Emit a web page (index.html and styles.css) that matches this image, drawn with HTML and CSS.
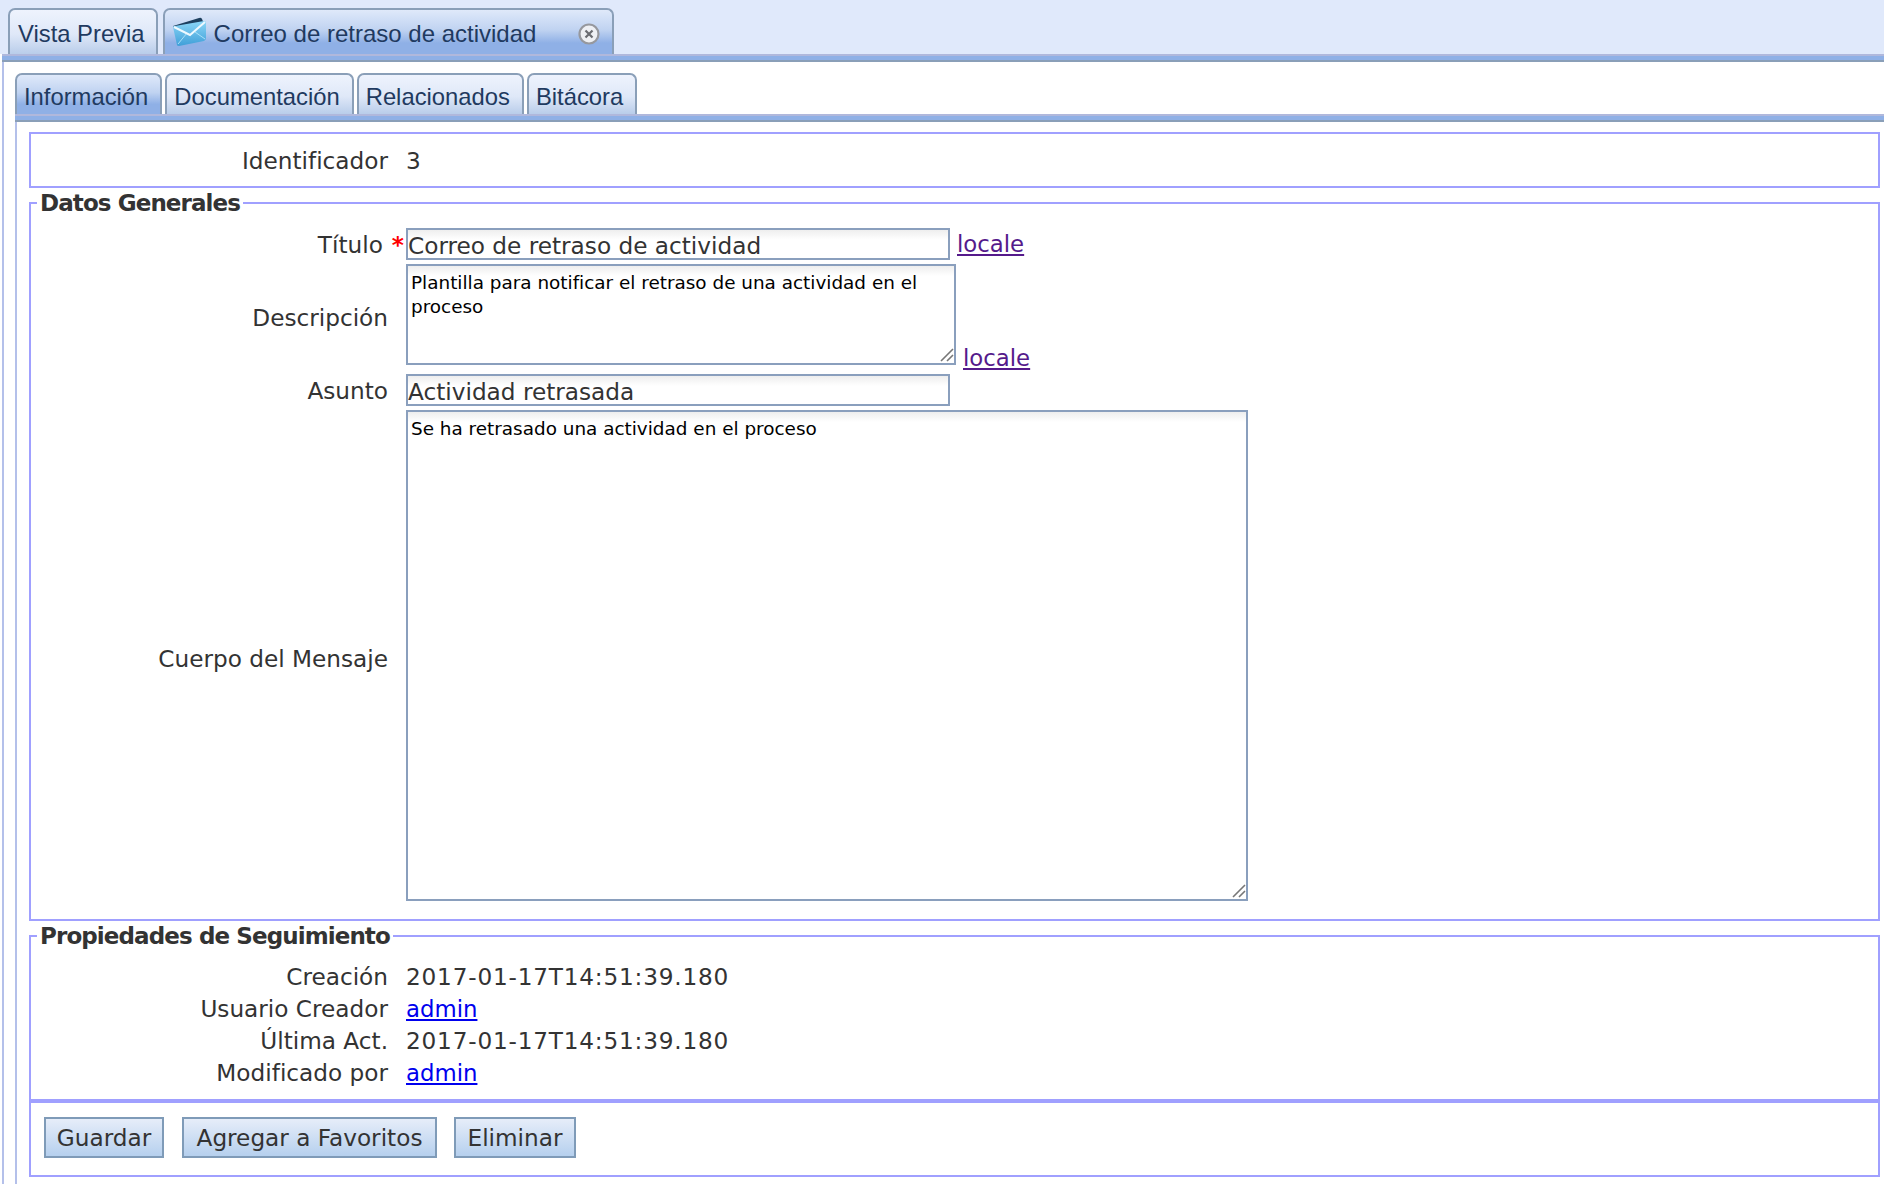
FILE: index.html
```html
<!DOCTYPE html>
<html lang="es">
<head>
    <meta charset="UTF-8">
    <meta name="viewport" content="width=device-width, initial-scale=1.0">
    <title>Correo de retraso de actividad</title>
    <link rel="stylesheet" href="styles.css">
</head>
<body>
    <nav class="tabs tabs-outer">
        <a class="tab">Vista Previa</a>
        <a class="tab tab-active tab-wide">
            <svg class="mail-icon" width="35" height="30" viewBox="0 0 35 30">
                <defs>
                    <linearGradient id="mailFill" x1="0" y1="0" x2="0" y2="1">
                        <stop offset="0" stop-color="#8bd6f7"/>
                        <stop offset="1" stop-color="#3f9fd8"/>
                    </linearGradient>
                </defs>
                <path d="M1 9 L27 1 Q29 0 30 2 L32 7 L5 14 Z" fill="#1d3f5e"/>
                <path d="M1 10 Q1 9 3 9 L32 4 Q34 4 34 6 L34 21 Q34 23 32 24 L7 29 Q5 29 5 28 Z" fill="url(#mailFill)"/>
                <path d="M6 27 L15 16 M33 22 L23 15" fill="none" stroke="#a9e0f8" stroke-width="1"/>
                <path d="M2 10 L18 18 L33 5" fill="none" stroke="#eef9ff" stroke-width="2"/>
            </svg>
            <span class="tab-label">Correo de retraso de actividad</span>
            <svg class="close-icon" width="22" height="22" viewBox="0 0 22 22">
                <circle cx="11" cy="11" r="9.5" fill="#eef0f4" stroke="#96989e" stroke-width="2.2"/>
                <path d="M7.5 7.5 L14.5 14.5 M14.5 7.5 L7.5 14.5" stroke="#6a6c72" stroke-width="2.2"/>
            </svg>
        </a>
    </nav>
    <div class="strip strip-outer"></div>

    <div class="panel-outer">
        <nav class="tabs tabs-inner">
            <a class="tab tab-active">Información</a>
            <a class="tab">Documentación</a>
            <a class="tab">Relacionados</a>
            <a class="tab">Bitácora</a>
        </nav>
        <div class="strip"></div>

        <main class="panel-inner">
            <div class="box box-id">
                <span class="label">Identificador</span>
                <span>3</span>
            </div>

            <fieldset class="group group-general">
                <legend>Datos Generales</legend>
                <div class="form-grid">
                    <label class="label">Título<span class="required">*</span></label>
                    <div class="field">
                        <input class="text-input" type="text" value="Correo de retraso de actividad">
                        <a class="locale" href="#">locale</a>
                    </div>
                    <label class="label">Descripción</label>
                    <div class="field field-desc">
                        <div class="area-wrap">
                            <textarea class="text-area area-desc">Plantilla para notificar el retraso de una actividad en el proceso</textarea>
                            <svg class="grip" width="16" height="16" viewBox="0 0 16 16">
                                <path d="M15 2 L3 14 M15 8 L9 14" stroke="#777" stroke-width="1.6"/>
                            </svg>
                        </div>
                        <a class="locale" href="#">locale</a>
                    </div>
                    <label class="label">Asunto</label>
                    <div class="field">
                        <input class="text-input" type="text" value="Actividad retrasada">
                    </div>
                    <label class="label label-body">Cuerpo del Mensaje</label>
                    <div class="field field-body">
                        <div class="area-wrap">
                            <textarea class="text-area area-body">Se ha retrasado una actividad en el proceso</textarea>
                            <svg class="grip" width="16" height="16" viewBox="0 0 16 16">
                                <path d="M15 2 L3 14 M15 8 L9 14" stroke="#777" stroke-width="1.6"/>
                            </svg>
                        </div>
                    </div>
                </div>
            </fieldset>

            <fieldset class="group group-tracking">
                <legend>Propiedades de Seguimiento</legend>
                <div class="info-grid">
                    <span class="label">Creación</span>
                    <span class="stamp">2017-01-17T14:51:39.180</span>
                    <span class="label">Usuario Creador</span>
                    <a class="user-link" href="#">admin</a>
                    <span class="label">Última Act.</span>
                    <span class="stamp">2017-01-17T14:51:39.180</span>
                    <span class="label">Modificado por</span>
                    <a class="user-link" href="#">admin</a>
                </div>
            </fieldset>

            <div class="box box-actions">
                <button class="btn btn-save">Guardar</button>
                <button class="btn btn-fav">Agregar a Favoritos</button>
                <button class="btn btn-del">Eliminar</button>
            </div>
        </main>
    </div>
</body>
</html>
```

FILE: styles.css
```css
html, body {
    height: 100%;
}
body {
    margin: 0;
    display: flex;
    flex-direction: column;
    overflow: hidden;
    background-color: #fff;
    color: #333;
    font-family: "DejaVu Sans", sans-serif;
    font-size: 23.2px;
}

/* tabs */
.tabs {
    display: flex;
    align-items: flex-end;
    font-family: "Liberation Sans", Arial, sans-serif;
    font-size: 23.8px;
    color: #1f3a60;
}
.tabs-outer {
    height: 54px;
    padding-left: 8px;
    gap: 5px;
    background-color: #e0e9fb;
}
.tabs-inner {
    height: 41px;
    padding-top: 11px;
    gap: 3px;
}
.tab {
    display: flex;
    align-items: center;
    box-sizing: border-box;
    height: 100%;
    padding: 5px 12px 0 7px;
    border: 2px solid #8a9fb8;
    border-bottom: none;
    border-radius: 7px 7px 0 0;
    background: linear-gradient(#eef3fd, #dfe8f8 55%, #b9cdea);
}
.tabs-outer .tab {
    height: 46px;
    padding: 3px 11px 0 8px;
}
.tab-active {
    background: linear-gradient(#dfe9fa, #c0d3f1 45%, #8fb0e6 75%);
}
.tabs-outer .tab-wide {
    width: 451px;
    padding: 0 0 0 7px;
    background: linear-gradient(#dfe9fa, #c0d3f1 45%, #8fb0e6 75%);
}
.mail-icon {
    flex: none;
}
.tab-label {
    margin-left: 7px;
    padding-top: 3px;
    font-size: 24px;
}
.close-icon {
    margin: 3px 0 0 42px;
}
.strip {
    box-sizing: border-box;
    height: 8px;
    background-color: #8fb0e6;
    border-top: 2px solid #b0b8dc;
    border-bottom: 2px solid #8a9fb8;
}
.strip-outer {
    margin-left: 2px;
}

/* panels */
.panel-outer {
    flex: 1;
    display: flex;
    flex-direction: column;
    margin-left: 2px;
    padding-left: 11px;
    border-left: 2px solid #b4c0ea;
}
.panel-inner {
    flex: 1;
    padding: 10px 4px 0 12px;
    border-left: 2px solid #b4c0ea;
}
.box {
    box-sizing: border-box;
    border: 2px solid #a0a0ff;
}
.box-id {
    display: grid;
    grid-template-columns: 357px auto;
    column-gap: 18px;
    align-items: center;
    height: 56px;
}
.group {
    margin: 0;
    padding: 0;
    border: 2px solid #a0a0ff;
}
.group legend {
    margin-left: 6px;
    padding: 0 3px;
    font-weight: bold;
    font-size: 23px;
    letter-spacing: -0.9px;
    line-height: 26px;
}
.group-general {
    margin-top: 2px;
    padding-bottom: 18px;
}
.group-tracking {
    margin-top: 2px;
    padding-bottom: 10px;
    border-bottom: none;
}
.label {
    text-align: right;
}
.label-body {
    padding-top: 10px;
}

/* form */
.form-grid {
    display: grid;
    grid-template-columns: 357px auto;
    column-gap: 18px;
    align-items: center;
    padding-top: 12px;
}
.required {
    margin: 0 -16px 0 9px;
    color: #f00;
    font-weight: bold;
}
.field {
    display: flex;
    align-items: center;
}
.field-desc {
    align-items: flex-end;
    margin: 4px 0 9px;
}
.field-body {
    margin-top: 4px;
}
.text-input,
.text-area {
    box-sizing: border-box;
    margin: 0;
    border: 2px solid #8a9fbd;
    border-radius: 0;
    background: linear-gradient(#eee, #fff 10px);
    font-family: "DejaVu Sans", sans-serif;
    outline: none;
}
.text-input {
    width: 544px;
    height: 32px;
    padding: 2px 0 0;
    color: #333;
    font-size: 23.2px;
}
.text-area {
    display: block;
    padding: 5px 3px 0;
    color: #000;
    font-size: 18.4px;
    line-height: 24px;
    resize: none;
}
.area-wrap {
    position: relative;
}
.area-desc {
    width: 550px;
    height: 101px;
}
.area-body {
    width: 842px;
    height: 491px;
}
.grip {
    position: absolute;
    right: 2px;
    bottom: 2px;
}
.locale {
    margin-left: 7px;
    color: #551a8b;
    font-size: 22.8px;
}
.field-desc .locale {
    margin-bottom: -6px;
}

/* tracking */
.info-grid {
    display: grid;
    grid-template-columns: 357px auto;
    column-gap: 18px;
    padding-top: 12px;
    line-height: 32px;
}
.stamp {
    letter-spacing: 0.8px;
}
.user-link {
    color: #00e;
    justify-self: start;
    font-size: 22.8px;
}

/* actions */
.box-actions {
    display: flex;
    gap: 17px;
    height: 78px;
    padding: 14px 0 0 13px;
    border-top-width: 4px;
}
.btn {
    height: 41px;
    padding: 0;
    border: 2px solid #7f9bb8;
    background: linear-gradient(#e6edf9, #b6d0ee);
    color: #333;
    font-family: "DejaVu Sans", sans-serif;
    font-size: 23.2px;
}
.btn-save {
    width: 120px;
    margin-right: 1px;
}
.btn-fav {
    width: 255px;
}
.btn-del {
    width: 122px;
}
```
